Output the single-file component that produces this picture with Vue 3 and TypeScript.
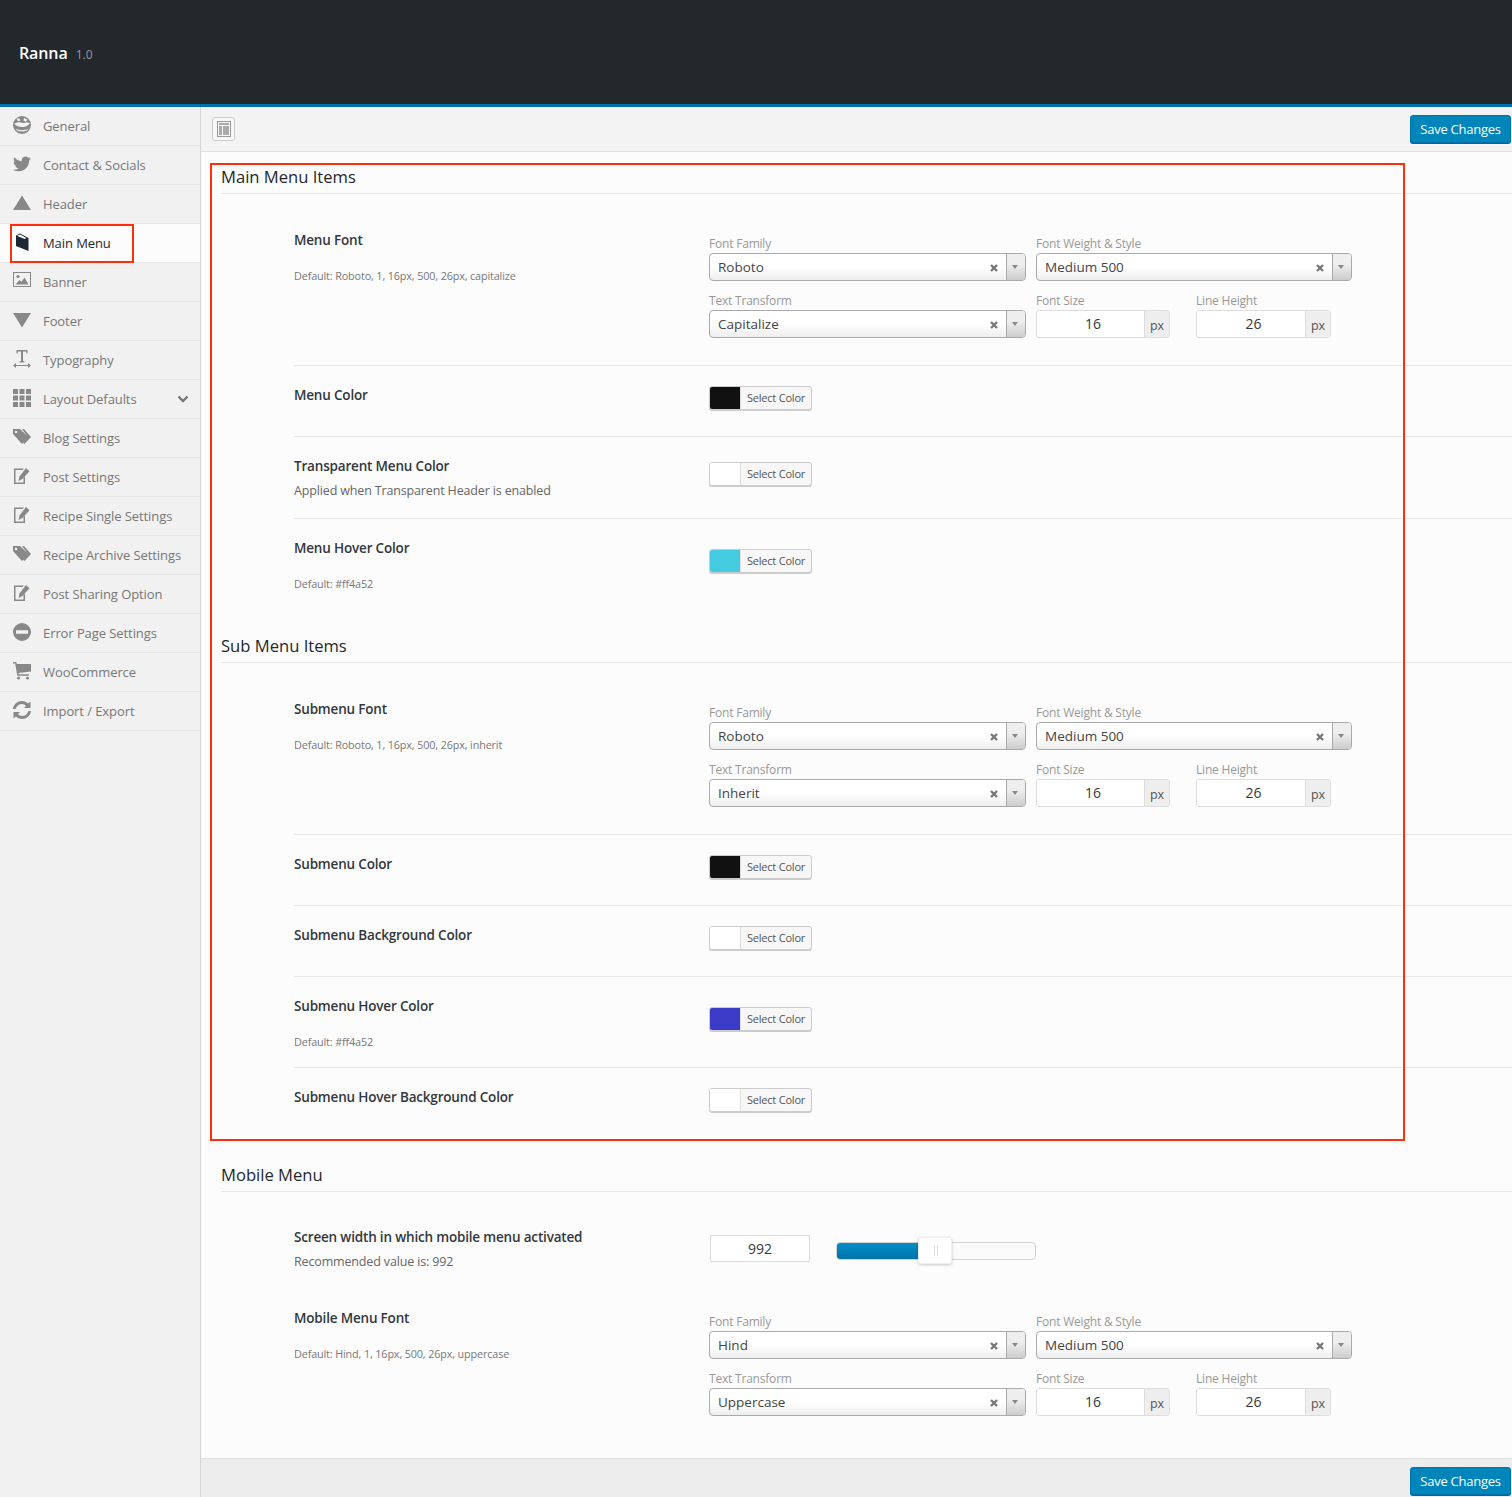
<template>
  <div class="page">
    <header class="topbar">
      <span class="brand">Ranna</span>
      <span class="version">1.0</span>
    </header>
    <div class="body">
      <aside class="sidebar">
        <div
          v-for="item in menu"
          :key="item.label"
          class="nav-item"
          :class="{ active: item.active }"
        >
          <svg class="nav-icon" viewBox="0 0 18 18" v-html="icons[item.icon]"></svg>
          <span>{{ item.label }}</span>
          <svg v-if="item.arrow" class="chevron" viewBox="0 0 12 8">
            <path d="M1.5 1.5 6 6l4.5-4.5" fill="none" stroke="currentColor" stroke-width="2.4" />
          </svg>
          <div v-if="item.active" class="mark mark-nav"></div>
        </div>
      </aside>
      <main class="main">
        <div class="toolbar">
          <button class="layout-btn">
            <svg viewBox="0 0 14 16" width="14" height="16">
              <rect x="0.5" y="0.5" width="13" height="15" fill="none" stroke="#999" />
              <rect x="2" y="2" width="10" height="2" fill="#aaa" />
              <rect x="2" y="5" width="3" height="9" fill="#aaa" />
              <rect x="6" y="5" width="6" height="9" fill="#aaa" />
            </svg>
          </button>
          <button class="save-btn">Save Changes</button>
        </div>
        <div class="content">
          <div class="mark mark-main"></div>
          <section v-for="section in sections" :key="section.title" class="section">
            <h2>{{ section.title }}</h2>
            <div
              v-for="row in section.rows"
              :key="row.title"
              class="row"
              :class="[row.kind, { plain: row.noLine }]"
            >
              <div class="label">
                <div class="row-title">{{ row.title }}</div>
                <div v-if="row.note" class="note">{{ row.note }}</div>
                <div v-if="row.hint" class="hint">{{ row.hint }}</div>
              </div>

              <div v-if="row.kind === 'font'" class="font-grid">
                <div class="field">
                  <label>Font Family</label>
                  <div class="select">
                    <span class="select-text">{{ row.family }}</span>
                    <svg class="clear" viewBox="0 0 8 8"><path d="M1 1l6 6M7 1 1 7" stroke="#777" stroke-width="2.4" /></svg>
                    <span class="select-arrow"></span>
                  </div>
                </div>
                <div class="field">
                  <label>Font Weight &amp; Style</label>
                  <div class="select">
                    <span class="select-text">Medium 500</span>
                    <svg class="clear" viewBox="0 0 8 8"><path d="M1 1l6 6M7 1 1 7" stroke="#777" stroke-width="2.4" /></svg>
                    <span class="select-arrow"></span>
                  </div>
                </div>
                <div class="field">
                  <label>Text Transform</label>
                  <div class="select">
                    <span class="select-text">{{ row.transform }}</span>
                    <svg class="clear" viewBox="0 0 8 8"><path d="M1 1l6 6M7 1 1 7" stroke="#777" stroke-width="2.4" /></svg>
                    <span class="select-arrow"></span>
                  </div>
                </div>
                <div class="size-pair">
                  <div class="field size-field">
                    <label>Font Size</label>
                    <div class="px-input"><input value="16" readonly /><span>px</span></div>
                  </div>
                  <div class="field size-field wide">
                    <label>Line Height</label>
                    <div class="px-input"><input value="26" readonly /><span>px</span></div>
                  </div>
                </div>
              </div>

              <div v-else-if="row.kind === 'range'" class="slider-wrap">
                <input class="slider-value" value="992" readonly />
                <div class="slider-track">
                  <div class="slider-fill" :style="{ width: row.fill + 'px' }"></div>
                  <div class="slider-handle" :style="{ left: (row.fill ?? 0) - 1 + 'px' }"><i></i></div>
                </div>
              </div>

              <button v-else class="color-btn">
                <span class="swatch" :style="{ background: row.color }"></span>
                <span class="color-text">Select Color</span>
              </button>
            </div>
          </section>
        </div>
        <div class="footer">
          <button class="save-btn">Save Changes</button>
        </div>
      </main>
    </div>
  </div>
</template>

<script setup lang="ts">
interface Row {
  title: string
  kind: string
  note?: string
  hint?: string
  color?: string
  family?: string
  transform?: string
  fill?: number
  noLine?: boolean
}

const editIcon =
  '<path d="M1 1.500h10L9.500 3H2.500v12.500h8V11L12 9.500V17H1z"/><path d="M13 1 16.500 4.200 9.500 12 5.500 14 6.500 9.500z"/>'
const tagIcon =
  '<path fill-rule="evenodd" d="M0 1h7l8.500 8-6.500 7L0 6zM3 2.800a1.200 1.200 0 1 0 0 2.400 1.200 1.200 0 0 0 0-2.400z"/><path d="M9 1h2l7 8-6.500 7-1.500-1.500 5-5.500z"/>'

const icons: Record<string, string> = {
  globe:
    '<path fill-rule="evenodd" d="M9 0a9 9 0 1 0 0 18A9 9 0 0 0 9 0zM3.500 2.800 6 2.300l1.500 2.200L5 5.200zm7.500-.9 3.300 1.600-1.300 2.200-2.500-1.300zM1.200 7.800c2.200-1.400 4.300-2 6.600-1.200 1.300.5 2.800.6 4.200.2 1.600-.5 3.200-.7 4.800.4-.8 1.800-3.200 3.200-6 3.700-3.400.6-7.200-.4-9.600-3.100zM2.500 12.800c3.500 1.800 8.700 2 13 0l-1.500 1.800c-3.300 1.300-6.700 1.200-10 0z"/>',
  twitter:
    '<path transform="scale(.75)" d="M23.953 4.570a10 10 0 0 1-2.825.775 4.958 4.958 0 0 0 2.163-2.723c-.951.555-2.005.959-3.127 1.184a4.920 4.920 0 0 0-8.384 4.482C7.690 8.095 4.067 6.130 1.640 3.162a4.822 4.822 0 0 0-.666 2.475c0 1.710.870 3.213 2.188 4.096a4.904 4.904 0 0 1-2.228-.616v.060a4.923 4.923 0 0 0 3.946 4.827 4.996 4.996 0 0 1-2.212.085 4.936 4.936 0 0 0 4.604 3.417 9.867 9.867 0 0 1-6.102 2.105c-.390 0-.779-.023-1.170-.067a13.995 13.995 0 0 0 7.557 2.209c9.053 0 13.998-7.496 13.998-13.985 0-.210 0-.420-.015-.630A9.935 9.935 0 0 0 24 4.590z"/>',
  up: '<path d="M9 1.500 18 16H0z"/>',
  book:
    '<path d="M3 2.500 7 .500l8.500 4.500v13L3 13z" fill="#1d2833"/><path d="M4 2.800 7 1.500l6.500 3.500-2 1z" fill="#fff"/>',
  picture:
    '<path d="M0 0h18v15H0zm1 1v13h16V1z"/><circle cx="5" cy="4.500" r="1.600"/><path d="M2.500 12.500 6.500 8l2 1.800 3-4.300 4 7z"/>',
  down: '<path d="M9 16.500 0 2h18z"/>',
  type:
    '<path d="M3.500 0h11v3.500h-1l-.5-2H10v9.500l1.500.5v1h-5v-1l1.500-.5V1.500H5l-.5 2h-1z"/><path d="M0 15.500 3 13v2h12v-2l3 2.500L15 18v-2H3v2z"/>',
  grid:
    '<path d="M0 0h5v5H0zm6.500 0h5v5h-5zM13 0h5v5h-5zM0 6.500h5v5H0zm6.500 0h5v5h-5zm6.500 0h5v5h-5zM0 13h5v5H0zm6.500 0h5v5h-5zM13 13h5v5h-5z"/>',
  tags: tagIcon,
  edit: editIcon,
  minus:
    '<path fill-rule="evenodd" d="M9 0a9 9 0 1 1 0 18A9 9 0 0 1 9 0zM3 7.300v3.400h12V7.300z"/>',
  cart:
    '<path d="M0 0h3.300l.5 2H18v7.500L5.500 11l.3 1.200H16v1.500H4.300L2.200 1.500H0z"/><circle cx="5.500" cy="16" r="1.500"/><circle cx="14.500" cy="16" r="1.500"/>',
  refresh:
    '<path d="M2.500 8H0C.4 3.500 4.500 0 9 0c2.500 0 4.500.9 6 2.400L17.500.5V7h-6.500l2-2C12 3.800 10.600 3 9 3 6 3 3.400 5 2.500 8z"/><path d="M15.500 10H18c-.4 4.500-4.500 8-9 8-2.500 0-4.500-.9-6-2.400L.5 17.500V11h6.500l-2 2c1 1.200 2.400 2 4 2 3 0 5.600-2 6.500-5z"/>',
}

const menu = [
  { label: 'General', icon: 'globe' },
  { label: 'Contact & Socials', icon: 'twitter' },
  { label: 'Header', icon: 'up' },
  { label: 'Main Menu', icon: 'book', active: true },
  { label: 'Banner', icon: 'picture' },
  { label: 'Footer', icon: 'down' },
  { label: 'Typography', icon: 'type' },
  { label: 'Layout Defaults', icon: 'grid', arrow: true },
  { label: 'Blog Settings', icon: 'tags' },
  { label: 'Post Settings', icon: 'edit' },
  { label: 'Recipe Single Settings', icon: 'edit' },
  { label: 'Recipe Archive Settings', icon: 'tags' },
  { label: 'Post Sharing Option', icon: 'edit' },
  { label: 'Error Page Settings', icon: 'minus' },
  { label: 'WooCommerce', icon: 'cart' },
  { label: 'Import / Export', icon: 'refresh' },
]

const sections: { title: string; rows: Row[] }[] = [
  {
    title: 'Main Menu Items',
    rows: [
      {
        title: 'Menu Font',
        kind: 'font',
        note: 'Default: Roboto, 1, 16px, 500, 26px, capitalize',
        family: 'Roboto',
        transform: 'Capitalize',
      },
      { title: 'Menu Color', kind: 'color', color: '#111111' },
      {
        title: 'Transparent Menu Color',
        kind: 'color',
        hint: 'Applied when Transparent Header is enabled',
        color: '#ffffff',
      },
      {
        title: 'Menu Hover Color',
        kind: 'color',
        note: 'Default: #ff4a52',
        color: '#45cbe0',
        noLine: true,
      },
    ],
  },
  {
    title: 'Sub Menu Items',
    rows: [
      {
        title: 'Submenu Font',
        kind: 'font',
        note: 'Default: Roboto, 1, 16px, 500, 26px, inherit',
        family: 'Roboto',
        transform: 'Inherit',
      },
      { title: 'Submenu Color', kind: 'color', color: '#111111' },
      { title: 'Submenu Background Color', kind: 'color', color: '#ffffff' },
      {
        title: 'Submenu Hover Color',
        kind: 'color',
        note: 'Default: #ff4a52',
        color: '#3b3bc8',
      },
      { title: 'Submenu Hover Background Color', kind: 'color', color: '#ffffff', noLine: true },
    ],
  },
  {
    title: 'Mobile Menu',
    rows: [
      {
        title: 'Screen width in which mobile menu activated',
        kind: 'range',
        hint: 'Recommended value is: 992',
        fill: 82,
        noLine: true,
      },
      {
        title: 'Mobile Menu Font',
        kind: 'font',
        note: 'Default: Hind, 1, 16px, 500, 26px, uppercase',
        family: 'Hind',
        transform: 'Uppercase',
        noLine: true,
      },
    ],
  },
]
</script>

<style>
body {
  margin: 0;
  background: #fcfcfc;
}
</style>

<style scoped>
.page {
  width: 1512px;
  height: 1497px;
  overflow: hidden;
  display: flex;
  flex-direction: column;
  font-family: "Open Sans", "Noto Sans", sans-serif;
  font-size: 13px;
  color: #444;
}

.topbar {
  height: 104px;
  flex: none;
  background: #23282d;
  border-bottom: 3px solid #0073aa;
  display: flex;
  align-items: center;
  padding-left: 19px;
  gap: 8px;
}

.brand {
  color: #fff;
  font-size: 16px;
  font-weight: 600;
  letter-spacing: -0.1px;
  position: relative;
  top: 1px;
}

.version {
  color: #999;
  font-size: 12px;
  position: relative;
  top: 2px;
}

.body {
  flex: 1;
  display: flex;
  min-height: 0;
}

.sidebar {
  width: 200px;
  flex: none;
  background: #f1f1f1;
  border-right: 1px solid #d5d5d5;
}

.nav-item {
  position: relative;
  height: 38px;
  border-bottom: 1px solid #e7e7e7;
  display: flex;
  align-items: center;
  padding-left: 13px;
  color: #777;
  letter-spacing: -0.08px;
}

.nav-item.active {
  background: #fcfcfc;
  color: #23282d;
}

.nav-icon {
  width: 18px;
  height: 18px;
  margin-right: 12px;
  fill: #888;
  flex: none;
  position: relative;
  top: -1px;
}

.chevron {
  position: absolute;
  left: 177px;
  top: 15px;
  width: 12px;
  height: 8px;
  color: #777;
}

.mark {
  position: absolute;
  border: 2px solid #ff2d0c;
  box-sizing: border-box;
  pointer-events: none;
}

.mark-nav {
  left: 10px;
  top: 0;
  width: 124px;
  height: 39px;
}

.main {
  flex: 1;
  min-width: 0;
  display: flex;
  flex-direction: column;
}

.toolbar {
  height: 44px;
  flex: none;
  background: #f3f3f3;
  border-bottom: 1px solid #e0e0e0;
  display: flex;
  align-items: center;
  justify-content: space-between;
  padding: 0 1px 0 11px;
}

.layout-btn {
  width: 23px;
  height: 24px;
  padding: 0;
  display: flex;
  align-items: center;
  justify-content: center;
  border: 1px solid #ccc;
  border-radius: 3px;
  background: #f7f7f7;
}

.save-btn {
  width: 101px;
  height: 28px;
  padding: 0;
  background: #0085ba;
  border: 1px solid #0073aa;
  border-radius: 3px;
  box-shadow: 0 1px 0 #006799;
  color: #fff;
  font-family: inherit;
  font-size: 13px;
  letter-spacing: -0.25px;
}

.content {
  flex: 1;
  position: relative;
  background: #fcfcfc;
  min-height: 0;
}

.mark-main {
  left: 9px;
  top: 11px;
  width: 1195px;
  height: 978px;
}

.section {
  margin-top: 25px;
}

.section:first-of-type {
  margin-top: 13px;
}

h2 {
  margin: 0 0 0 20px;
  height: 28px;
  line-height: 24px;
  font-size: 16.600px;
  font-weight: 400;
  color: #23282d;
  border-bottom: 1px solid #e8e8e8;
}

.row {
  margin-left: 93px;
  display: flex;
  align-items: center;
  border-bottom: 1px solid #e8e8e8;
}

.row.plain {
  border-bottom: 0;
}

.row.font {
  align-items: flex-start;
  padding: 42px 0 27px;
}

.row.range {
  align-items: flex-start;
}

.label {
  width: 415px;
  flex: none;
  padding-top: 19px;
}

.row.font .label {
  padding-top: 0;
  margin-top: -6px;
}

.row.range .label {
  padding-top: 35px;
}

.row-title {
  font-size: 13.500px;
  line-height: 20px;
  font-weight: 600;
  color: #32373c;
  letter-spacing: -0.18px;
  margin-bottom: 31px;
}

.row-title:has(+ .note) {
  margin-bottom: 16px;
}

.row-title:has(+ .hint) {
  margin-bottom: 5px;
}

.note {
  font-size: 10.800px;
  line-height: 20px;
  color: #777;
  letter-spacing: -0.13px;
  margin-bottom: 15px;
}

.hint {
  font-size: 12.500px;
  line-height: 20px;
  color: #666;
  letter-spacing: -0.15px;
  margin-bottom: 17px;
}

.row.font .note {
  margin-bottom: 0;
}

.row.range .hint {
  margin-bottom: 0;
}

.color-btn {
  width: 103px;
  height: 24px;
  padding: 0;
  display: flex;
  background: #f7f7f7;
  border: 1px solid #ccc;
  border-radius: 3px;
  box-shadow: 0 1px 0 #ccc;
  font-family: inherit;
  overflow: hidden;
  margin-top: -6px;
}

.label:has(.hint) + .color-btn {
  margin-top: -7px;
}

.swatch {
  width: 31px;
  height: 100%;
  border-right: 1px solid #ddd;
  flex: none;
  box-sizing: border-box;
}

.color-text {
  flex: 1;
  font-size: 11px;
  line-height: 21px;
  color: #555;
  letter-spacing: -0.2px;
  text-align: center;
}

.font-grid {
  display: grid;
  grid-template-columns: 317px 316px;
  column-gap: 10px;
  row-gap: 12px;
}

.field label {
  display: block;
  height: 17px;
  line-height: 16px;
  font-size: 12px;
  color: #999;
  letter-spacing: -0.2px;
}

.select {
  height: 28px;
  box-sizing: border-box;
  display: flex;
  align-items: center;
  border: 1px solid #aaa;
  border-radius: 4px;
  background: linear-gradient(to top, #eee 0%, #fff 50%);
  color: #444;
  position: relative;
}

.select-text {
  flex: 1;
  padding: 0 0 0 8px;
  font-size: 13.500px;
  line-height: 24px;
}

.clear {
  width: 8px;
  height: 8px;
  margin-right: 8px;
  position: relative;
  top: 1px;
}

.select-arrow {
  width: 19px;
  height: 100%;
  box-sizing: border-box;
  border-left: 1px solid #aaa;
  border-radius: 0 3px 3px 0;
  background: linear-gradient(to top, #ccc 0%, #eee 60%);
  position: relative;
}

.select-arrow::after {
  content: "";
  position: absolute;
  left: 5px;
  top: 11px;
  border: 3px solid transparent;
  border-top: 4px solid #888;
  border-bottom: 0;
}

.size-pair {
  display: flex;
  gap: 26px;
}

.size-field {
  width: 134px;
}

.size-field.wide {
  width: 135px;
}

.px-input {
  display: flex;
  height: 28px;
  box-sizing: border-box;
  border: 1px solid #ddd;
  border-radius: 3px;
  overflow: hidden;
  background: #fff;
}

.px-input input {
  flex: 1;
  min-width: 0;
  border: 0;
  outline: 0;
  padding: 0 0 2px 5px;
  background: #fff;
  text-align: center;
  font-family: inherit;
  font-size: 14px;
  color: #32373c;
}

.px-input span {
  width: 25px;
  flex: none;
  box-sizing: border-box;
  background: #eee;
  border-left: 1px solid #ddd;
  text-align: center;
  font-size: 12.500px;
  line-height: 30px;
  color: #555;
}

.slider-wrap {
  display: flex;
  align-items: flex-start;
  gap: 26px;
  padding: 43px 0 0 1px;
}

.slider-value {
  width: 100px;
  height: 27px;
  box-sizing: border-box;
  border: 1px solid #ddd;
  outline: 0;
  padding: 0;
  background: #fff;
  text-align: center;
  font-family: inherit;
  font-size: 14px;
  color: #32373c;
}

.slider-track {
  width: 200px;
  height: 18px;
  box-sizing: border-box;
  border: 1px solid #d3d3d3;
  border-radius: 4px;
  background: #fafafa;
  position: relative;
  margin-top: 7px;
}

.slider-fill {
  height: 100%;
  background: linear-gradient(to bottom, #008ec9, #0073aa);
  border-radius: 3px 0 0 3px;
}

.slider-handle {
  position: absolute;
  top: -6px;
  width: 34px;
  height: 27px;
  box-sizing: border-box;
  background: #fff;
  border: 1px solid #eee;
  border-radius: 3px;
  box-shadow: 0 1px 3px rgba(0, 0, 0, 0.2);
}

.slider-handle i {
  position: absolute;
  left: 15px;
  top: 7px;
  width: 2px;
  height: 11px;
  border-left: 1px solid #ddd;
  border-right: 1px solid #ddd;
}

.footer {
  height: 30px;
  flex: none;
  background: #ededed;
  border-top: 1px solid #e2e2e2;
  display: flex;
  justify-content: flex-end;
  padding: 8px 1px 0 0;
}
</style>
